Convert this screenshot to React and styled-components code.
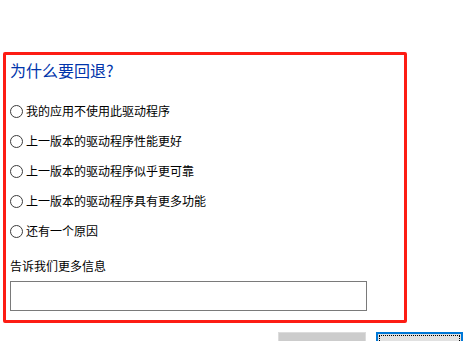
import styled, { createGlobalStyle } from "styled-components";

const GlobalStyle = createGlobalStyle`
  html, body {
    margin: 0;
    padding: 0;
    background: #ffffff;
    overflow: hidden;
  }
  body {
    font-family: "Noto Sans CJK SC", "Noto Sans", sans-serif;
    font-size: 12px;
    color: #000;
  }
`;

const Page = styled.div`
  width: 469px;
  height: 341px;
  box-sizing: border-box;
  padding: 52px 6px 0 3px;
  display: flex;
  flex-direction: column;
`;

const Panel = styled.div`
  width: 404px;
  box-sizing: border-box;
  border: 3px solid #fd1c14;
  border-radius: 2px;
  padding: 4px 4px 9px 4px;
  display: flex;
  flex-direction: column;
`;

const Title = styled.h1`
  margin: 0 0 15px 0;
  font-size: 16px;
  line-height: 22px;
  font-weight: 400;
  color: #0034ab;
`;

const Options = styled.div`
  display: flex;
  flex-direction: column;
`;

const Option = styled.label`
  display: flex;
  align-items: center;
  height: 30px;
  line-height: 30px;
  cursor: default;
`;

const Radio = styled.span`
  width: 11px;
  height: 11px;
  border: 1px solid #3c3c3c;
  border-radius: 50%;
  margin-right: 3px;
  flex-shrink: 0;
  background: #fff;
`;

const FieldLabel = styled.div`
  margin-top: 11px;
  line-height: 18px;
`;

const TextBox = styled.input`
  margin-top: 6px;
  width: 357px;
  height: 30px;
  box-sizing: border-box;
  border: 1px solid #7a7a7a;
  outline: none;
  padding: 0 4px;
  font: inherit;
`;

const ButtonRow = styled.div`
  display: flex;
  justify-content: flex-end;
  gap: 10px;
  margin-top: 9px;
`;

const Button = styled.button`
  width: ${(p) => (p.$primary ? "87px" : "88px")};
  height: 24px;
  box-sizing: border-box;
  font: inherit;
  padding: 0;
  background: ${(p) => (p.$primary ? "#e1e1e1" : "#cccccc")};
  border: ${(p) => (p.$primary ? "2px solid #0078d7" : "1px solid #dcdcdc")};
  position: relative;
  &::after {
    content: "";
    display: ${(p) => (p.$primary ? "block" : "none")};
    position: absolute;
    inset: 1px;
    border: 1px dotted #000;
  }
`;

const reasons = [
  "我的应用不使用此驱动程序",
  "上一版本的驱动程序性能更好",
  "上一版本的驱动程序似乎更可靠",
  "上一版本的驱动程序具有更多功能",
  "还有一个原因",
];

export default function App() {
  return (
    <>
      <GlobalStyle />
      <Page>
        <Panel>
          <Title>为什么要回退?</Title>
          <Options>
            {reasons.map((r) => (
              <Option key={r}>
                <Radio />
                {r}
              </Option>
            ))}
          </Options>
          <FieldLabel>告诉我们更多信息</FieldLabel>
          <TextBox type="text" />
        </Panel>
        <ButtonRow>
          <Button />
          <Button $primary />
        </ButtonRow>
      </Page>
    </>
  );
}
